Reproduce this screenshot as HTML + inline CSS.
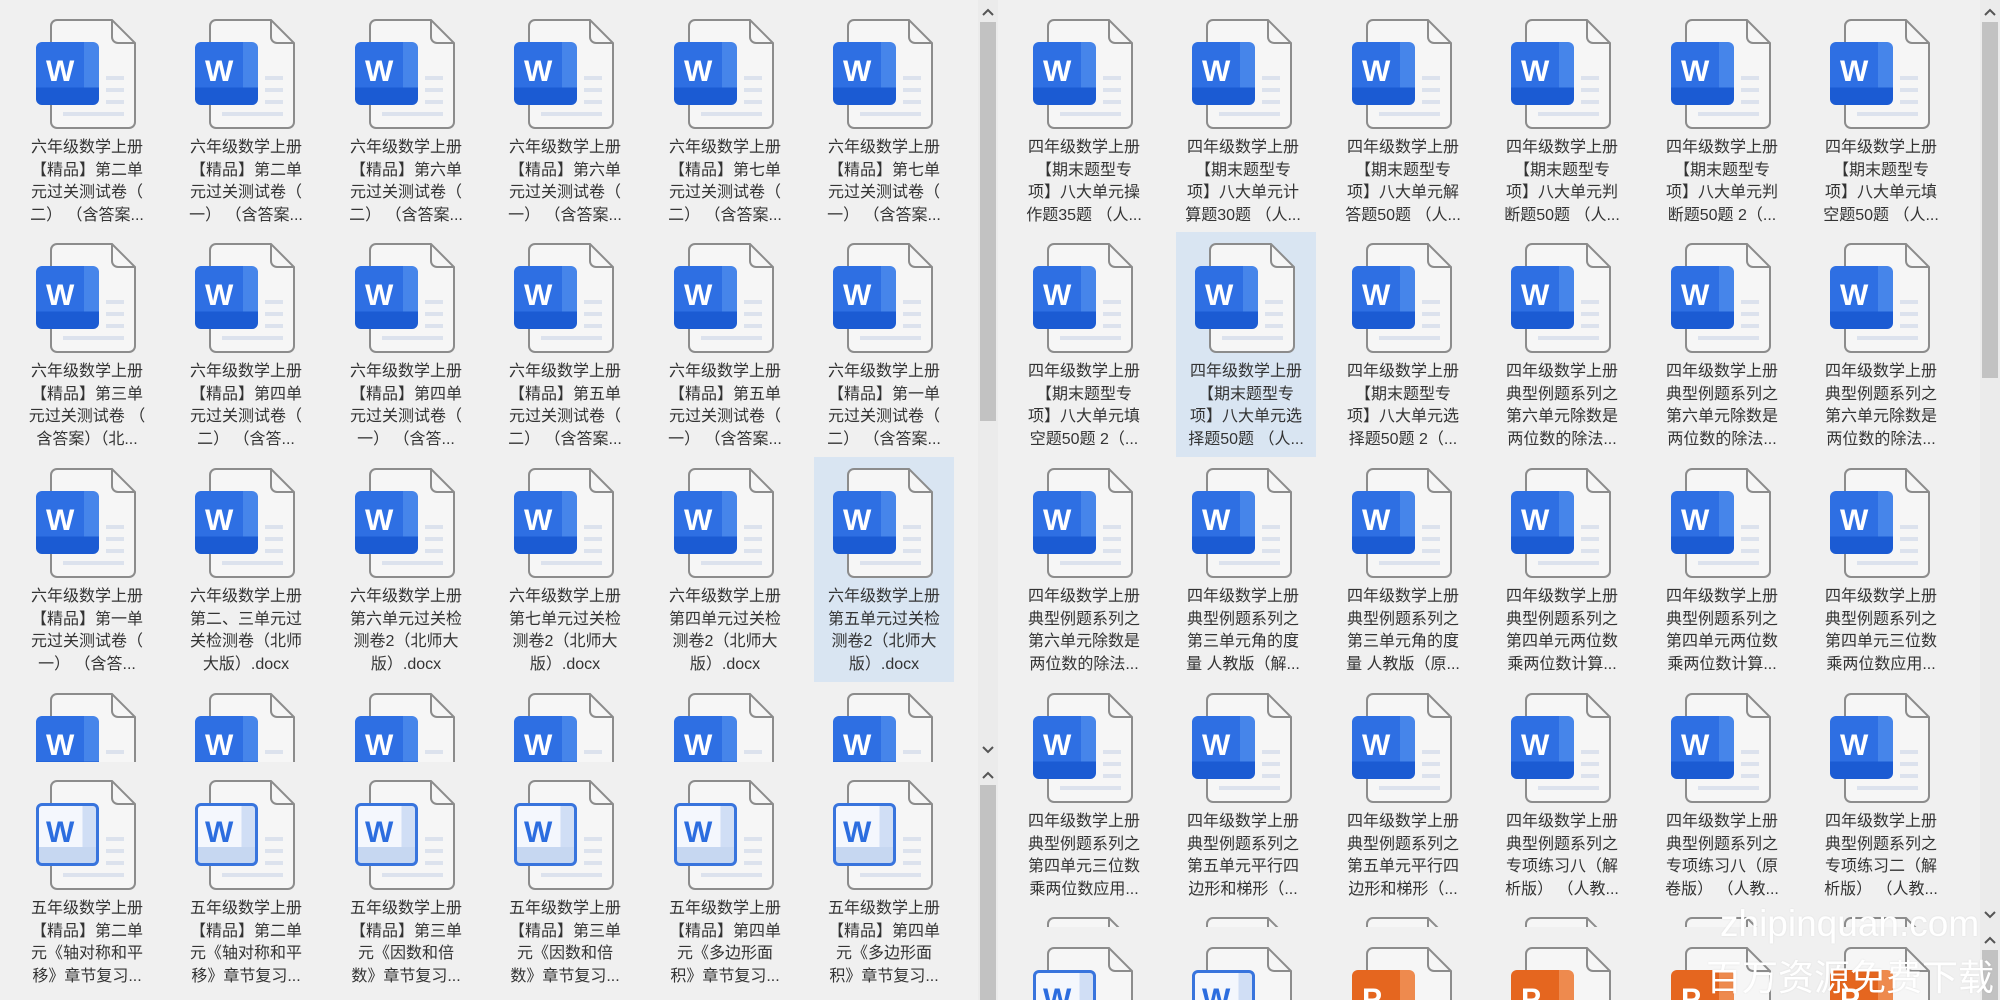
<!DOCTYPE html>
<html style="overflow:hidden;width:2000px;height:1000px;"><head><meta charset="utf-8">
<style>
html,body{margin:0;padding:0;}
body{width:2000px;height:1000px;background:#f0f0f0;position:relative;overflow:hidden;font-family:"Liberation Sans","Noto Sans CJK SC",sans-serif;}
.box{position:absolute;overflow:hidden;}
.c{position:absolute;width:140px;height:225px;}
.c.sel{background:#d9e5f2;}
.pg{position:absolute;left:33px;top:11px;width:86px;height:110px;}
.w{position:absolute;left:19px;top:34px;width:63px;height:63px;border-radius:6px;box-sizing:border-box;
background:linear-gradient(to bottom,rgba(0,0,0,0) 72%,#1b5bd3 72%),linear-gradient(to right,#2e6fe3 76%,#4685ea 76%);
color:#fff;font:bold 30px/30px "Liberation Sans",sans-serif;padding:15px 0 0 10px;}
.w.o{background:linear-gradient(to bottom,rgba(0,0,0,0) 72%,#c6d7f1 72%),linear-gradient(to right,#f4f7fd 76%,#d0def5 76%);
border:3px solid #3874dd;color:#2c6ddf;padding:12px 0 0 7px;}
.w.pp{background:linear-gradient(to bottom,rgba(0,0,0,0) 72%,#d4561a 72%),linear-gradient(to right,#e5661f 76%,#ee8a4e 76%);}
.c p{position:absolute;left:-10px;width:160px;top:129px;margin:0;text-align:center;font-size:16px;line-height:22.5px;color:#333;white-space:nowrap;}
.sb{position:absolute;width:20px;}
.th{position:absolute;left:2px;width:16px;background:#c2c2c2;}
.ch{position:absolute;left:4px;width:12px;height:8px;}
.wm{position:absolute;color:#fff;white-space:nowrap;text-shadow:0 0 2px rgba(0,0,0,0.08);}
</style></head><body>
<svg width="0" height="0" style="position:absolute">
<defs>
<symbol id="p" viewBox="0 0 86 110">
<path d="M7,1 H62 L85,24 V103 a6,6 0 0 1 -6,6 H7 a6,6 0 0 1 -6,-6 V7 a6,6 0 0 1 6,-6Z" fill="#f6f6f6" stroke="#8c8c8c" stroke-width="2"/>
<path d="M62,1 V18 a6,6 0 0 0 6,6 H85" fill="none" stroke="#8c8c8c" stroke-width="2"/>
<rect x="56" y="57" width="18" height="4" fill="#dce2ed"/>
<rect x="56" y="69" width="18" height="4" fill="#dce2ed"/>
<rect x="56" y="81" width="18" height="4" fill="#dce2ed"/>
<rect x="13" y="93" width="61" height="4" fill="#dce2ed"/>
</symbol>
<symbol id="up" viewBox="0 0 12 8"><polyline points="1,7 6,2 11,7" fill="none" stroke="#555" stroke-width="2"/></symbol>
<symbol id="dn" viewBox="0 0 12 8"><polyline points="1,1 6,6 11,1" fill="none" stroke="#555" stroke-width="2"/></symbol>
</defs></svg>

<!-- LEFT PART 1 -->
<div class="box" style="left:1px;top:0;width:977px;height:762px;">
<div class="c" style="left:16px;top:8px"><svg class="pg"><use href="#p"/></svg><div class="w">W</div><p>六年级数学上册<br>【精品】第二单<br>元过关测试卷（<br>二） （含答案...</p></div>
<div class="c" style="left:175px;top:8px"><svg class="pg"><use href="#p"/></svg><div class="w">W</div><p>六年级数学上册<br>【精品】第二单<br>元过关测试卷（<br>一） （含答案...</p></div>
<div class="c" style="left:335px;top:8px"><svg class="pg"><use href="#p"/></svg><div class="w">W</div><p>六年级数学上册<br>【精品】第六单<br>元过关测试卷（<br>二） （含答案...</p></div>
<div class="c" style="left:494px;top:8px"><svg class="pg"><use href="#p"/></svg><div class="w">W</div><p>六年级数学上册<br>【精品】第六单<br>元过关测试卷（<br>一） （含答案...</p></div>
<div class="c" style="left:654px;top:8px"><svg class="pg"><use href="#p"/></svg><div class="w">W</div><p>六年级数学上册<br>【精品】第七单<br>元过关测试卷（<br>二） （含答案...</p></div>
<div class="c" style="left:813px;top:8px"><svg class="pg"><use href="#p"/></svg><div class="w">W</div><p>六年级数学上册<br>【精品】第七单<br>元过关测试卷（<br>一） （含答案...</p></div>

<div class="c" style="left:16px;top:232px"><svg class="pg"><use href="#p"/></svg><div class="w">W</div><p>六年级数学上册<br>【精品】第三单<br>元过关测试卷 （<br>含答案）（北...</p></div>
<div class="c" style="left:175px;top:232px"><svg class="pg"><use href="#p"/></svg><div class="w">W</div><p>六年级数学上册<br>【精品】第四单<br>元过关测试卷（<br>二） （含答...</p></div>
<div class="c" style="left:335px;top:232px"><svg class="pg"><use href="#p"/></svg><div class="w">W</div><p>六年级数学上册<br>【精品】第四单<br>元过关测试卷（<br>一） （含答...</p></div>
<div class="c" style="left:494px;top:232px"><svg class="pg"><use href="#p"/></svg><div class="w">W</div><p>六年级数学上册<br>【精品】第五单<br>元过关测试卷（<br>二） （含答案...</p></div>
<div class="c" style="left:654px;top:232px"><svg class="pg"><use href="#p"/></svg><div class="w">W</div><p>六年级数学上册<br>【精品】第五单<br>元过关测试卷（<br>一） （含答案...</p></div>
<div class="c" style="left:813px;top:232px"><svg class="pg"><use href="#p"/></svg><div class="w">W</div><p>六年级数学上册<br>【精品】第一单<br>元过关测试卷（<br>二） （含答案...</p></div>

<div class="c" style="left:16px;top:457px"><svg class="pg"><use href="#p"/></svg><div class="w">W</div><p>六年级数学上册<br>【精品】第一单<br>元过关测试卷（<br>一） （含答...</p></div>
<div class="c" style="left:175px;top:457px"><svg class="pg"><use href="#p"/></svg><div class="w">W</div><p>六年级数学上册<br>第二、三单元过<br>关检测卷（北师<br>大版）.docx</p></div>
<div class="c" style="left:335px;top:457px"><svg class="pg"><use href="#p"/></svg><div class="w">W</div><p>六年级数学上册<br>第六单元过关检<br>测卷2（北师大<br>版）.docx</p></div>
<div class="c" style="left:494px;top:457px"><svg class="pg"><use href="#p"/></svg><div class="w">W</div><p>六年级数学上册<br>第七单元过关检<br>测卷2（北师大<br>版）.docx</p></div>
<div class="c" style="left:654px;top:457px"><svg class="pg"><use href="#p"/></svg><div class="w">W</div><p>六年级数学上册<br>第四单元过关检<br>测卷2（北师大<br>版）.docx</p></div>
<div class="c sel" style="left:813px;top:457px"><svg class="pg"><use href="#p"/></svg><div class="w">W</div><p>六年级数学上册<br>第五单元过关检<br>测卷2（北师大<br>版）.docx</p></div>

<div class="c" style="left:16px;top:682px"><svg class="pg"><use href="#p"/></svg><div class="w">W</div></div>
<div class="c" style="left:175px;top:682px"><svg class="pg"><use href="#p"/></svg><div class="w">W</div></div>
<div class="c" style="left:335px;top:682px"><svg class="pg"><use href="#p"/></svg><div class="w">W</div></div>
<div class="c" style="left:494px;top:682px"><svg class="pg"><use href="#p"/></svg><div class="w">W</div></div>
<div class="c" style="left:654px;top:682px"><svg class="pg"><use href="#p"/></svg><div class="w">W</div></div>
<div class="c" style="left:813px;top:682px"><svg class="pg"><use href="#p"/></svg><div class="w">W</div></div>
</div>

<!-- LEFT PART 2 -->
<div class="box" style="left:1px;top:762px;width:977px;height:238px;">
<div class="c" style="left:16px;top:7px"><svg class="pg"><use href="#p"/></svg><div class="w o">W</div><p>五年级数学上册<br>【精品】第二单<br>元《轴对称和平<br>移》章节复习...</p></div>
<div class="c" style="left:175px;top:7px"><svg class="pg"><use href="#p"/></svg><div class="w o">W</div><p>五年级数学上册<br>【精品】第二单<br>元《轴对称和平<br>移》章节复习...</p></div>
<div class="c" style="left:335px;top:7px"><svg class="pg"><use href="#p"/></svg><div class="w o">W</div><p>五年级数学上册<br>【精品】第三单<br>元《因数和倍<br>数》章节复习...</p></div>
<div class="c" style="left:494px;top:7px"><svg class="pg"><use href="#p"/></svg><div class="w o">W</div><p>五年级数学上册<br>【精品】第三单<br>元《因数和倍<br>数》章节复习...</p></div>
<div class="c" style="left:654px;top:7px"><svg class="pg"><use href="#p"/></svg><div class="w o">W</div><p>五年级数学上册<br>【精品】第四单<br>元《多边形面<br>积》章节复习...</p></div>
<div class="c" style="left:813px;top:7px"><svg class="pg"><use href="#p"/></svg><div class="w o">W</div><p>五年级数学上册<br>【精品】第四单<br>元《多边形面<br>积》章节复习...</p></div>
</div>

<!-- RIGHT PART 1 -->
<div class="box" style="left:998px;top:0;width:982px;height:927px;">
<div class="c" style="left:16px;top:8px"><svg class="pg"><use href="#p"/></svg><div class="w">W</div><p>四年级数学上册<br>【期末题型专<br>项】八大单元操<br>作题35题 （人...</p></div>
<div class="c" style="left:175px;top:8px"><svg class="pg"><use href="#p"/></svg><div class="w">W</div><p>四年级数学上册<br>【期末题型专<br>项】八大单元计<br>算题30题 （人...</p></div>
<div class="c" style="left:335px;top:8px"><svg class="pg"><use href="#p"/></svg><div class="w">W</div><p>四年级数学上册<br>【期末题型专<br>项】八大单元解<br>答题50题 （人...</p></div>
<div class="c" style="left:494px;top:8px"><svg class="pg"><use href="#p"/></svg><div class="w">W</div><p>四年级数学上册<br>【期末题型专<br>项】八大单元判<br>断题50题 （人...</p></div>
<div class="c" style="left:654px;top:8px"><svg class="pg"><use href="#p"/></svg><div class="w">W</div><p>四年级数学上册<br>【期末题型专<br>项】八大单元判<br>断题50题 2（...</p></div>
<div class="c" style="left:813px;top:8px"><svg class="pg"><use href="#p"/></svg><div class="w">W</div><p>四年级数学上册<br>【期末题型专<br>项】八大单元填<br>空题50题 （人...</p></div>

<div class="c" style="left:16px;top:232px"><svg class="pg"><use href="#p"/></svg><div class="w">W</div><p>四年级数学上册<br>【期末题型专<br>项】八大单元填<br>空题50题 2（...</p></div>
<div class="c sel" style="left:178px;top:232px"><svg class="pg"><use href="#p"/></svg><div class="w">W</div><p>四年级数学上册<br>【期末题型专<br>项】八大单元选<br>择题50题 （人...</p></div>
<div class="c" style="left:335px;top:232px"><svg class="pg"><use href="#p"/></svg><div class="w">W</div><p>四年级数学上册<br>【期末题型专<br>项】八大单元选<br>择题50题 2（...</p></div>
<div class="c" style="left:494px;top:232px"><svg class="pg"><use href="#p"/></svg><div class="w">W</div><p>四年级数学上册<br>典型例题系列之<br>第六单元除数是<br>两位数的除法...</p></div>
<div class="c" style="left:654px;top:232px"><svg class="pg"><use href="#p"/></svg><div class="w">W</div><p>四年级数学上册<br>典型例题系列之<br>第六单元除数是<br>两位数的除法...</p></div>
<div class="c" style="left:813px;top:232px"><svg class="pg"><use href="#p"/></svg><div class="w">W</div><p>四年级数学上册<br>典型例题系列之<br>第六单元除数是<br>两位数的除法...</p></div>

<div class="c" style="left:16px;top:457px"><svg class="pg"><use href="#p"/></svg><div class="w">W</div><p>四年级数学上册<br>典型例题系列之<br>第六单元除数是<br>两位数的除法...</p></div>
<div class="c" style="left:175px;top:457px"><svg class="pg"><use href="#p"/></svg><div class="w">W</div><p>四年级数学上册<br>典型例题系列之<br>第三单元角的度<br>量 人教版（解...</p></div>
<div class="c" style="left:335px;top:457px"><svg class="pg"><use href="#p"/></svg><div class="w">W</div><p>四年级数学上册<br>典型例题系列之<br>第三单元角的度<br>量 人教版（原...</p></div>
<div class="c" style="left:494px;top:457px"><svg class="pg"><use href="#p"/></svg><div class="w">W</div><p>四年级数学上册<br>典型例题系列之<br>第四单元两位数<br>乘两位数计算...</p></div>
<div class="c" style="left:654px;top:457px"><svg class="pg"><use href="#p"/></svg><div class="w">W</div><p>四年级数学上册<br>典型例题系列之<br>第四单元两位数<br>乘两位数计算...</p></div>
<div class="c" style="left:813px;top:457px"><svg class="pg"><use href="#p"/></svg><div class="w">W</div><p>四年级数学上册<br>典型例题系列之<br>第四单元三位数<br>乘两位数应用...</p></div>

<div class="c" style="left:16px;top:682px"><svg class="pg"><use href="#p"/></svg><div class="w">W</div><p>四年级数学上册<br>典型例题系列之<br>第四单元三位数<br>乘两位数应用...</p></div>
<div class="c" style="left:175px;top:682px"><svg class="pg"><use href="#p"/></svg><div class="w">W</div><p>四年级数学上册<br>典型例题系列之<br>第五单元平行四<br>边形和梯形（...</p></div>
<div class="c" style="left:335px;top:682px"><svg class="pg"><use href="#p"/></svg><div class="w">W</div><p>四年级数学上册<br>典型例题系列之<br>第五单元平行四<br>边形和梯形（...</p></div>
<div class="c" style="left:494px;top:682px"><svg class="pg"><use href="#p"/></svg><div class="w">W</div><p>四年级数学上册<br>典型例题系列之<br>专项练习八（解<br>析版） （人教...</p></div>
<div class="c" style="left:654px;top:682px"><svg class="pg"><use href="#p"/></svg><div class="w">W</div><p>四年级数学上册<br>典型例题系列之<br>专项练习八（原<br>卷版） （人教...</p></div>
<div class="c" style="left:813px;top:682px"><svg class="pg"><use href="#p"/></svg><div class="w">W</div><p>四年级数学上册<br>典型例题系列之<br>专项练习二（解<br>析版） （人教...</p></div>

<div class="c" style="left:16px;top:906px"><svg class="pg"><use href="#p"/></svg></div>
<div class="c" style="left:175px;top:906px"><svg class="pg"><use href="#p"/></svg></div>
<div class="c" style="left:335px;top:906px"><svg class="pg"><use href="#p"/></svg></div>
<div class="c" style="left:494px;top:906px"><svg class="pg"><use href="#p"/></svg></div>
<div class="c" style="left:654px;top:906px"><svg class="pg"><use href="#p"/></svg></div>
<div class="c" style="left:813px;top:906px"><svg class="pg"><use href="#p"/></svg></div>
</div>

<!-- RIGHT PART 2 -->
<div class="box" style="left:998px;top:927px;width:982px;height:73px;">
<div class="c" style="left:16px;top:9px"><svg class="pg"><use href="#p"/></svg><div class="w o">W</div></div>
<div class="c" style="left:175px;top:9px"><svg class="pg"><use href="#p"/></svg><div class="w o">W</div></div>
<div class="c" style="left:335px;top:9px"><svg class="pg"><use href="#p"/></svg><div class="w pp">P</div></div>
<div class="c" style="left:494px;top:9px"><svg class="pg"><use href="#p"/></svg><div class="w pp">P</div></div>
<div class="c" style="left:654px;top:9px"><svg class="pg"><use href="#p"/></svg><div class="w pp">P</div></div>
<div class="c" style="left:813px;top:9px"><svg class="pg"><use href="#p"/></svg><div class="w pp">P</div></div>
</div>

<!-- LEFT SCROLLBAR -->
<div class="sb" style="left:978px;top:0;height:1000px;background:#ebebeb;">
<svg class="ch" style="top:8px"><use href="#up"/></svg>
<div class="th" style="top:22px;height:399px;"></div>
<svg class="ch" style="top:746px"><use href="#dn"/></svg>
<svg class="ch" style="top:771px"><use href="#up"/></svg>
<div class="th" style="top:785px;height:215px;"></div>
</div>
<!-- RIGHT SCROLLBAR -->
<div class="sb" style="left:1980px;top:0;height:1000px;background:#ebebeb;">
<svg class="ch" style="top:8px"><use href="#up"/></svg>
<div class="th" style="top:22px;height:356px;"></div>
<svg class="ch" style="top:911px"><use href="#dn"/></svg>
<svg class="ch" style="top:936px"><use href="#up"/></svg>
<div class="th" style="top:950px;height:50px;"></div>
</div>

<div class="wm" style="left:1720px;top:902px;font-size:37px;line-height:44px;">zhipinquan.com</div>
<div class="wm" style="left:1706px;top:952px;font-size:36px;line-height:46px;letter-spacing:0px;font-family:'Noto Sans CJK SC',sans-serif;">百万资源免费下载</div>
</body></html>
